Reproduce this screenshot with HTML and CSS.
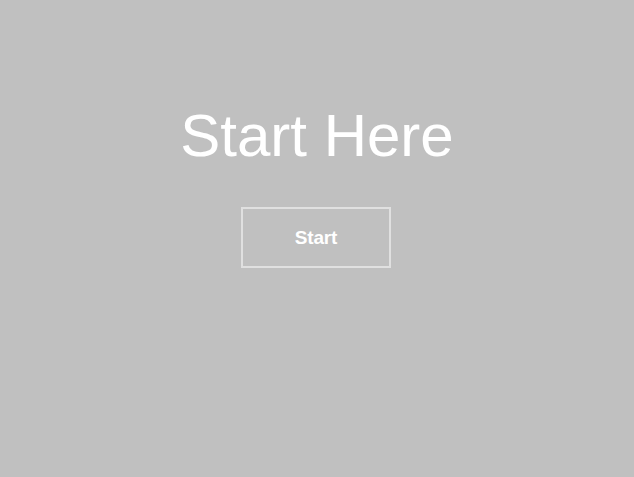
FILE: index.html
```html
<!DOCTYPE html>
<html>
<head>
<meta charset="utf-8">
<link rel="stylesheet" href="styles.css">
</head>
<body>
<main class="page">
  <h1 class="title">Start Here</h1>
  <button class="start-btn">Start</button>
</main>
</body>
</html>
```

FILE: styles.css
```css
html, body {
  margin: 0;
  padding: 0;
  height: 100%;
}
body {
  background: #c0c0c0;
  font-family: "Liberation Sans", Arial, Helvetica, sans-serif;
  color: #fff;
}
.page {
  display: flex;
  flex-direction: column;
  align-items: center;
  padding-top: 101px;
}
.title {
  margin: 0;
  font-size: 60px;
  font-weight: normal;
  line-height: 69px;
  color: #fff;
}
.start-btn {
  margin-top: 37px;
  margin-right: 2px;
  width: 150px;
  height: 61px;
  box-sizing: border-box;
  background: transparent;
  border: 2px solid #e0e0e0;
  color: #fff;
  font-family: "Liberation Sans", Arial, Helvetica, sans-serif;
  font-size: 19px;
  font-weight: bold;
  letter-spacing: -0.2px;
  padding: 0;
  cursor: pointer;
}
```
